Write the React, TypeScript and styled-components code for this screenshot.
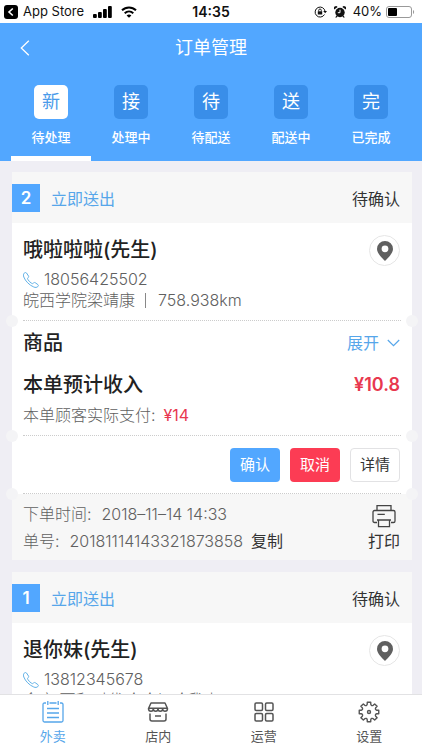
import React from 'react';
import styled, { createGlobalStyle, css } from 'styled-components';

const blue = '#52a7ff';
const red = '#fc3c54';

const GlobalStyle = createGlobalStyle`
  * { box-sizing: border-box; }
  body {
    margin: 0;
    background: #efeef4;
    font-family: Inter, "Noto Sans CJK SC", sans-serif;
    font-size: 16px;
    color: #333;
  }
  button { font: inherit; color: inherit; border: 0; padding: 0; background: none; cursor: pointer; }
  a { color: inherit; text-decoration: none; }
  h1, h2, h3, p { margin: 0; font-weight: 400; }
  svg { display: block; flex: none; }
`;

const Screen = styled.div`
  display: flex;
  flex-direction: column;
  height: 100vh;
`;

const StatusBar = styled.div`
  flex: none;
  display: grid;
  grid-template-columns: 1fr auto 1fr;
  align-items: center;
  height: 23px;
  padding: 0 4px;
  background: #fff;
  color: #111;
  font-size: 13px;
  line-height: 23px;
`;

const StatusGroup = styled.div<{ $end?: boolean }>`
  display: flex;
  align-items: center;
  gap: ${(p) => (p.$end ? 7 : 9)}px;
  justify-content: ${(p) => (p.$end ? 'flex-end' : 'flex-start')};
  padding-right: ${(p) => (p.$end ? 3 : 0)}px;
`;

const BatteryLevel = styled.span`
  display: flex;
  align-items: center;
  gap: 4px;
`;

const BackToApp = styled.button`
  display: flex;
  align-items: center;
  gap: 5px;
`;

const Clock = styled.time`
  font-size: 14px;
  font-weight: 600;
`;

const Header = styled.header`
  flex: none;
  background: ${blue};
  color: #fff;
`;

const TitleBar = styled.div`
  display: grid;
  grid-template-columns: 40px 1fr 40px;
  align-items: center;
  height: 50px;
`;

const BackButton = styled.button`
  display: flex;
  justify-content: flex-end;
  padding: 4px 10px;
`;

const Title = styled.h1`
  font-size: 18px;
  line-height: 26px;
  text-align: center;
`;

const Tabs = styled.nav`
  display: flex;
  padding: 0 11px;
`;

const TabButton = styled.button<{ $active?: boolean }>`
  flex: 1;
  display: flex;
  flex-direction: column;
  align-items: center;
  gap: 8px;
  height: 88px;
  padding-top: 12px;
  border-bottom: 5px solid ${(p) => (p.$active ? '#fff' : 'transparent')};
  font-size: 13px;
  line-height: 20px;
  font-weight: 500;
`;

const TabGlyph = styled.span<{ $active?: boolean }>`
  width: 34px;
  height: 34px;
  border-radius: 5px;
  background: ${(p) => (p.$active ? '#fff' : '#398ee9')};
  color: ${(p) => (p.$active ? '#4a9bea' : '#fff')};
  font-size: 18px;
  line-height: 34px;
  font-weight: 400;
  text-align: center;
`;

const OrderList = styled.main`
  flex: 1;
  min-height: 0;
  overflow-y: auto;
  scrollbar-width: none;
  display: flex;
  flex-direction: column;
  gap: 12px;
  padding: 11px 10px 0 12px;
`;

const Card = styled.article`
  flex: none;
  background: #fff;
`;

const CardHeader = styled.div`
  display: flex;
  align-items: center;
  gap: 11px;
  height: 51px;
  padding-right: 12px;
  background: #f7f7f7;
`;

const OrderNumber = styled.span`
  width: 28px;
  height: 28px;
  background: ${blue};
  color: #fff;
  font-size: 17px;
  line-height: 28px;
  font-weight: 600;
  text-align: center;
`;

const Delivery = styled.span`
  flex: 1;
  color: #56a6ea;
`;

const Section = styled.section<{ $pad: string; $muted?: boolean }>`
  position: relative;
  padding: ${(p) => p.$pad};
  background: ${(p) => (p.$muted ? '#f7f7f7' : '#fff')};
`;

const notch = css`
  content: '';
  position: absolute;
  bottom: -6px;
  z-index: 1;
  width: 12px;
  height: 12px;
  border-radius: 50%;
  background: #f4f4f6;
`;

const TornSection = styled(Section)`
  &::before { ${notch} left: -6px; }
  &::after { ${notch} right: -6px; }
`;

const Perforation = styled.hr`
  position: absolute;
  left: 11px;
  right: 11px;
  bottom: 0;
  margin: 0;
  border: 0;
  border-top: 1px dotted #ccc;
`;

const Row = styled.div<{ $top?: boolean }>`
  display: flex;
  justify-content: space-between;
  align-items: ${(p) => (p.$top ? 'flex-start' : 'center')};
`;

const Heading = styled.h2`
  font-size: 20px;
  line-height: 28px;
  font-weight: 500;
  color: #222;
`;

const Detail = styled.p`
  display: flex;
  align-items: center;
  font-size: 16px;
  line-height: 21px;
  font-weight: 300;
  color: #606060;
`;

const Contact = styled.div`
  margin-top: 5px;
`;

const PhoneLink = styled.a`
  display: flex;
  align-items: center;
  gap: 5px;
`;

const Divider = styled.span`
  width: 1px;
  height: 15px;
  margin: 0 12px 0 10px;
  background: #888;
`;

const PinButton = styled.button`
  display: grid;
  place-items: center;
  width: 31px;
  height: 31px;
  margin: -1px 0 -2px;
  border: 1px solid #e6e6e6;
  border-radius: 50%;
`;

const ExpandButton = styled.button`
  display: flex;
  align-items: center;
  gap: 8px;
  line-height: 28px;
  color: #56a6ea;
`;

const Income = styled.div`
  margin: 14px 0 6px;
`;

const Amount = styled.strong`
  color: #e8384f;
  font-size: 18px;
  line-height: 28px;
  font-weight: 600;
`;

const Paid = styled.span`
  margin-left: 8px;
  color: #e8384f;
  font-weight: 400;
`;

const Actions = styled.div`
  display: flex;
  justify-content: flex-end;
  gap: 10px;
`;

const tones = {
  primary: css`background: ${blue}; color: #fff;`,
  danger: css`background: ${red}; color: #fff;`,
  plain: css`background: #fff; color: #333; border: 1px solid #e2e2e4;`,
};

const ActionButton = styled.button<{ $tone: keyof typeof tones }>`
  width: 50px;
  height: 34px;
  border-radius: 4px;
  font-size: 15px;
  line-height: 22px;
  ${(p) => tones[p.$tone]}
`;

const Meta = styled(Detail)`
  line-height: 27px;
`;

const MetaValue = styled.span`
  margin-left: 10px;
`;

const CopyButton = styled.button`
  margin-left: 8px;
  font-weight: 400;
  color: #333;
`;

const PrintButton = styled.button`
  display: flex;
  flex-direction: column;
  align-items: center;
  padding-top: 3px;
  line-height: 27px;
`;

const BottomNav = styled.nav`
  flex: none;
  display: flex;
  height: 56px;
  border-top: 1px solid #e2e2e4;
  background: #fff;
`;

const NavLink = styled.a<{ $active?: boolean }>`
  flex: 1;
  display: flex;
  flex-direction: column;
  align-items: center;
  gap: 3px;
  padding-top: 6px;
  font-size: 13px;
  line-height: 20px;
  color: ${(p) => (p.$active ? '#56a6ea' : '#555')};
`;

const PinIcon = () => (
  <svg width="16" height="20" viewBox="0 0 16 20" fill="#606060" fillRule="evenodd">
    <path d="M8 0a8 8 0 0 0-8 8c0 4.500 5 8.800 8 12 3-3.200 8-7.500 8-12a8 8 0 0 0-8-8Zm0 4.400a3.400 3.400 0 1 1 0 6.800 3.400 3.400 0 0 1 0-6.800Z" />
  </svg>
);

const PhoneIcon = () => (
  <svg width="16" height="16" viewBox="0 0 16 16" fill="none" stroke="#62b1e6" strokeWidth="1" strokeLinejoin="round">
    <path d="M1.200 1.200C2 .4 3 .3 3.500 1l2 3c.4.7.1 1.300-.6 1.900-.5.4-.5.9-.1 1.500 1 1.700 2.300 3 4 4 .6.400 1.100.3 1.500-.2.600-.7 1.200-.9 1.900-.5l2.700 1.900c.7.5.7 1.300-.1 2-1 .9-2.400 1.100-4 .4C6.300 13.200 2.300 9 .8 5 .3 3.500.3 2 1.200 1.200Z" />
  </svg>
);

const PrinterIcon = () => (
  <svg width="24" height="24" viewBox="0 0 24 24" fill="none" stroke="#444" strokeWidth="1.300">
    <path d="M5 6.500V1.700h14v4.800M5 18.500H2.600c-1 0-1.600-.6-1.600-1.600V8c0-1 .6-1.500 1.600-1.500h18.800c1 0 1.600.5 1.600 1.500v8.900c0 1-.6 1.600-1.600 1.600H19M5 16h14M6.500 16v6.700h11V16M5.500 10.300h7.300" />
  </svg>
);

const OrdersIcon = () => (
  <svg width="22" height="22" viewBox="0 0 22 22" fill="none" stroke="#56a6ea" strokeWidth="1.300">
    <path d="M4 2H2.500C1.500 2 1 2.500 1 3.500v16c0 1 .5 1.500 1.500 1.500h17c1 0 1.500-.5 1.500-1.500v-16c0-1-.5-1.500-1.500-1.500H18M7.500 2h7M5.800 0v4M16.200 0v4M5 7.500h12M5 12h12M5 16.500h12" />
  </svg>
);

const ShopIcon = () => (
  <svg width="22" height="22" viewBox="0 0 22 22" fill="none" stroke="#555" strokeWidth="1.500" strokeLinejoin="round">
    <path d="M4 2h14l2.500 5.500c0 1.700-1 2.800-2.500 2.800s-2.300-1-2.300-2.500c0 1.500-.9 2.500-2.400 2.500S11 9.300 11 7.800c0 1.500-.8 2.500-2.300 2.500S6.300 9.300 6.300 7.800c0 1.500-.8 2.500-2.300 2.500S1.500 9.200 1.500 7.500L4 2ZM1.800 7.300h18.400M3 12.500V18c0 1.300.7 2 2 2h12c1.300 0 2-.7 2-2v-5.500M8 15h6" />
  </svg>
);

const GridIcon = () => (
  <svg width="22" height="22" viewBox="0 0 22 22" fill="none" stroke="#555" strokeWidth="1.500">
    <rect x="2" y="2" width="7.500" height="7.500" rx="1.200" />
    <rect x="12.500" y="2" width="7.500" height="7.500" rx="1.200" />
    <rect x="2" y="12.500" width="7.500" height="7.500" rx="1.200" />
    <rect x="12.500" y="12.500" width="7.500" height="7.500" rx="1.200" />
  </svg>
);

const gearPath = Array.from({ length: 8 }, (_, i) => {
  const point = (radius: number, degrees: number) => {
    const a = ((degrees + i * 45) * Math.PI) / 180;
    return `${(11 + radius * Math.sin(a)).toFixed(2)} ${(11 - radius * Math.cos(a)).toFixed(2)}`;
  };
  return `${i ? 'L' : 'M'}${point(9.9, -10)}L${point(9.9, 10)}L${point(7.9, 13)}Q${point(6.2, 22.5)} ${point(7.9, 32)}`;
}).join('') + 'Z';

const GearIcon = () => (
  <svg width="22" height="22" viewBox="0 0 22 22" fill="none" stroke="#555" strokeWidth="1.400" strokeLinejoin="round">
    <path d={gearPath} />
    <circle cx="11" cy="11" r="1.500" />
  </svg>
);

const ReturnIcon = () => (
  <svg width="14" height="14" viewBox="0 0 14 14">
    <rect width="14" height="14" rx="3" fill="#000" />
    <path d="M8.800 3.500 5 7l3.800 3.500" fill="none" stroke="#fff" strokeWidth="1.600" />
  </svg>
);

const SignalIcon = () => (
  <svg width="19" height="12" viewBox="0 0 19 12" fill="#000">
    <rect x="0" y="8" width="3.800" height="4" rx="1" />
    <rect x="5" y="6" width="3.800" height="6" rx="1" />
    <rect x="10" y="3" width="3.800" height="9" rx="1" />
    <rect x="15" y="0" width="3.800" height="12" rx="1" />
  </svg>
);

const WifiIcon = () => (
  <svg width="16" height="12" viewBox="0 0 16 12" fill="none" stroke="#000" strokeWidth="2">
    <path d="M1 4.300c4-3.900 10-3.900 14 0M3.700 7.200c2.500-2.300 6.100-2.300 8.600 0" />
    <path d="M8 11.800 5.600 9.400c1.400-1.200 3.400-1.200 4.800 0Z" fill="#000" stroke="none" />
  </svg>
);

const RotationLockIcon = () => (
  <svg width="13" height="12" viewBox="0 0 13 12" fill="none" stroke="#111">
    <path d="M10.500 8.500a5 5 0 1 1 .6-3" />
    <path d="m9.200 5 2 2.300L13 5Z" fill="#111" stroke="none" />
    <rect x="3.800" y="5.300" width="4.400" height="3.200" fill="#111" stroke="none" />
    <path d="M4.700 5.500V4.300a1.300 1.300 0 0 1 2.600 0v1.200" strokeWidth=".9" />
  </svg>
);

const AlarmIcon = () => (
  <svg width="12" height="12" viewBox="0 0 12 12" fill="#111">
    <circle cx="6" cy="6.500" r="4.700" />
    <path d="M.3 3.500A2 2 0 0 1 3.600 1ZM11.700 3.500A2 2 0 0 0 8.400 1ZM2.500 9.500l-1.300 2h1.500l1-1.300ZM9.500 9.500l1.300 2H9.300l-1-1.300Z" />
    <path d="M6 3.700v3H3.800" fill="none" stroke="#fff" strokeWidth="1" />
  </svg>
);

const BatteryIcon = () => (
  <svg width="29" height="12" viewBox="0 0 29 12">
    <rect x=".5" y=".5" width="25" height="11" rx="2.500" fill="none" stroke="#999" />
    <rect x="2" y="2" width="9" height="8" rx="1" fill="#000" />
    <path d="M27 4v4c1.500-.5 1.500-3.500 0-4Z" fill="#999" />
  </svg>
);

const tabs = [
  { glyph: '新', label: '待处理' },
  { glyph: '接', label: '处理中' },
  { glyph: '待', label: '待配送' },
  { glyph: '送', label: '配送中' },
  { glyph: '完', label: '已完成' },
];

interface Order {
  number: number;
  name: string;
  phone: string;
  address: string;
  distance?: string;
  income?: string;
  paid?: string;
  time?: string;
  serial?: string;
}

const orders: Order[] = [
  {
    number: 2,
    name: '哦啦啦啦(先生)',
    phone: '18056425502',
    address: '皖西学院梁靖康',
    distance: '758.938km',
    income: '¥10.8',
    paid: '¥14',
    time: '2018–11–14 14:33',
    serial: '20181114143321873858',
  },
  { number: 1, name: '退你妹(先生)', phone: '13812345678', address: '金寓·可和时代哈哈与哈我小' },
];

const navItems = [
  { label: '外卖', Icon: OrdersIcon },
  { label: '店内', Icon: ShopIcon },
  { label: '运营', Icon: GridIcon },
  { label: '设置', Icon: GearIcon },
];

function OrderCard({ order }: { order: Order }) {
  return (
    <Card>
      <CardHeader>
        <OrderNumber>{order.number}</OrderNumber>
        <Delivery>立即送出</Delivery>
        <span>待确认</span>
      </CardHeader>
      <TornSection $pad="13px 12px 10px 11px">
        <Row $top>
          <Heading>{order.name}</Heading>
          <PinButton aria-label="查看位置"><PinIcon /></PinButton>
        </Row>
        <Contact>
          <Detail>
            <PhoneLink href={`tel:${order.phone}`}><PhoneIcon />{order.phone}</PhoneLink>
          </Detail>
          <Detail>
            {order.address}
            {order.distance && <><Divider />{order.distance}</>}
          </Detail>
        </Contact>
        <Perforation />
      </TornSection>
      {order.income && (
        <>
          <TornSection $pad="8px 12px 10px 11px">
            <Row>
              <Heading>商品</Heading>
              <ExpandButton>
                展开
                <svg width="13" height="8" viewBox="0 0 13 8" fill="none" stroke="#56a6ea" strokeWidth="1.200">
                  <path d="m.8 1 5.700 5.700L12.200 1" />
                </svg>
              </ExpandButton>
            </Row>
            <Income>
              <Row>
                <Heading>本单预计收入</Heading>
                <Amount>{order.income}</Amount>
              </Row>
            </Income>
            <Detail>本单顾客实际支付:<Paid>{order.paid}</Paid></Detail>
            <Perforation />
          </TornSection>
          <TornSection $pad="12px">
            <Actions>
              <ActionButton $tone="primary">确认</ActionButton>
              <ActionButton $tone="danger">取消</ActionButton>
              <ActionButton $tone="plain">详情</ActionButton>
            </Actions>
            <Perforation />
          </TornSection>
          <Section $pad="7px 12px 5px 11px" $muted>
            <Row $top>
              <div>
                <Meta>下单时间:<MetaValue>{order.time}</MetaValue></Meta>
                <Meta>单号:<MetaValue>{order.serial}</MetaValue><CopyButton>复制</CopyButton></Meta>
              </div>
              <PrintButton><PrinterIcon />打印</PrintButton>
            </Row>
          </Section>
        </>
      )}
    </Card>
  );
}

export default function App() {
  return (
    <Screen>
      <GlobalStyle />
      <StatusBar>
        <StatusGroup>
          <BackToApp><ReturnIcon />App Store</BackToApp>
          <SignalIcon />
          <WifiIcon />
        </StatusGroup>
        <Clock>14:35</Clock>
        <StatusGroup $end>
          <RotationLockIcon />
          <AlarmIcon />
          <BatteryLevel>40%<BatteryIcon /></BatteryLevel>
        </StatusGroup>
      </StatusBar>
      <Header>
        <TitleBar>
          <BackButton aria-label="返回">
            <svg width="10" height="16" viewBox="0 0 10 16" fill="none" stroke="#fff" strokeWidth="1.300">
              <path d="M8.800.7 1.300 8l7.500 7.300" />
            </svg>
          </BackButton>
          <Title>订单管理</Title>
        </TitleBar>
        <Tabs>
          {tabs.map((tab, i) => (
            <TabButton key={tab.label} $active={i === 0}>
              <TabGlyph $active={i === 0}>{tab.glyph}</TabGlyph>
              {tab.label}
            </TabButton>
          ))}
        </Tabs>
      </Header>
      <OrderList>
        {orders.map((order) => <OrderCard key={order.number} order={order} />)}
      </OrderList>
      <BottomNav>
        {navItems.map(({ label, Icon }, i) => (
          <NavLink key={label} href="#" $active={i === 0}><Icon />{label}</NavLink>
        ))}
      </BottomNav>
    </Screen>
  );
}
